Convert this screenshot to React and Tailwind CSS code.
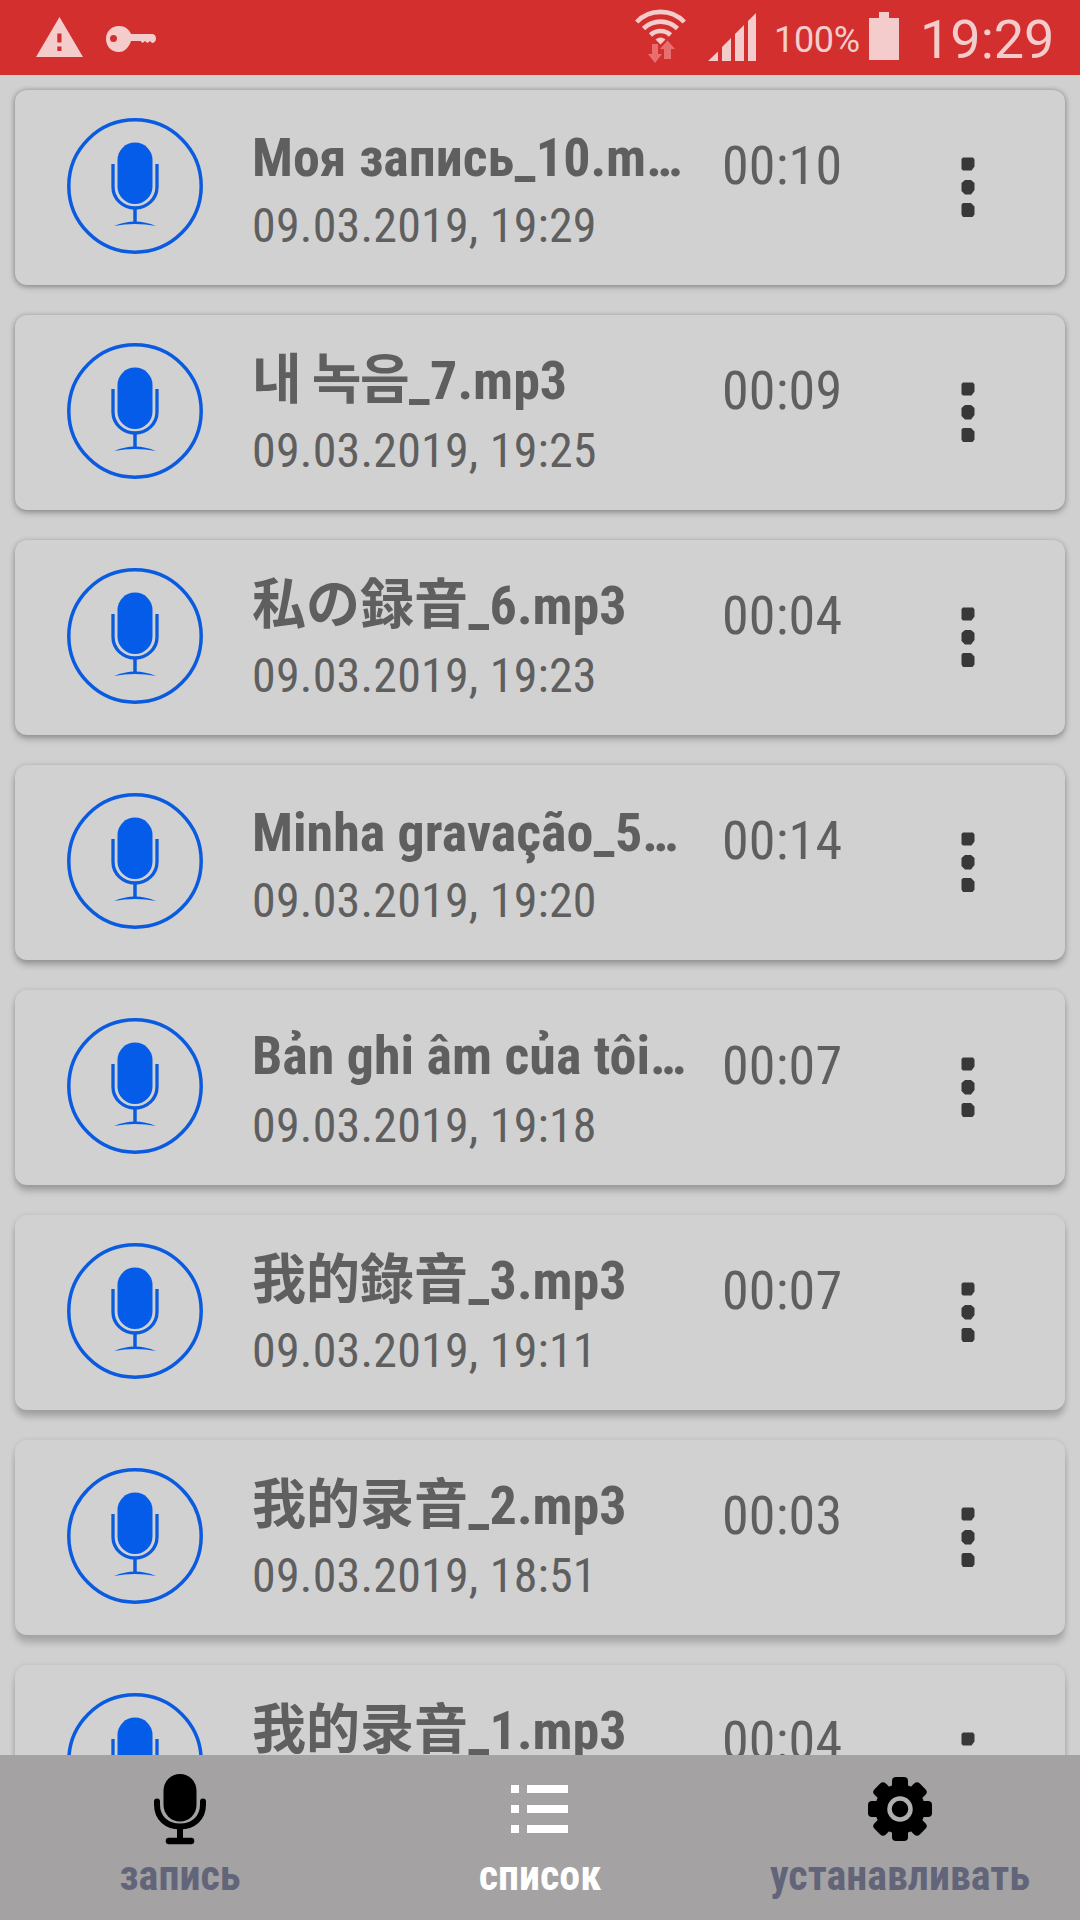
const LATIN = "font-['Roboto_Condensed','Roboto',sans-serif]";
const KR = "font-['Roboto_Condensed','Roboto','Noto_Sans_CJK_KR',sans-serif]";
const JP = "font-['Roboto_Condensed','Roboto','Noto_Sans_CJK_JP',sans-serif]";
const TC = "font-['Roboto_Condensed','Roboto','Noto_Sans_CJK_TC',sans-serif]";
const SC = "font-['Roboto_Condensed','Roboto','Noto_Sans_CJK_SC',sans-serif]";

const LOW = "pt-[25px]";
const HIGH = "pt-[23px]";

const recordings = [
  { title: "Моя запись_10.m…", date: "09.03.2019, 19:29", length: "00:10", font: LATIN, shift: LOW, shadow: "shadow-[0_2px_6px_rgba(0,0,0,0.26),0_0_5px_rgba(0,0,0,0.22)]" },
  { title: <><span className="tracking-[-1.25px]">내 녹음</span>_7.mp3</>, date: "09.03.2019, 19:25", length: "00:09", font: KR, shift: HIGH, shadow: "shadow-[0_3px_6px_rgba(0,0,0,0.26),0_0_5px_rgba(0,0,0,0.18)]" },
  { title: "私の録音_6.mp3", date: "09.03.2019, 19:23", length: "00:04", font: JP, shift: HIGH, shadow: "shadow-[0_4px_6px_rgba(0,0,0,0.25),0_0_5px_rgba(0,0,0,0.16)]" },
  { title: "Minha gravação_5…", date: "09.03.2019, 19:20", length: "00:14", font: LATIN, shift: LOW, shadow: "shadow-[0_5px_6px_rgba(0,0,0,0.24),0_0_5px_rgba(0,0,0,0.14)]" },
  { title: "Bản ghi âm của tôi…", date: "09.03.2019, 19:18", length: "00:07", font: LATIN, shift: HIGH, shadow: "shadow-[0_6px_6px_rgba(0,0,0,0.22),0_0_5px_rgba(0,0,0,0.12)]" },
  { title: "我的錄音_3.mp3", date: "09.03.2019, 19:11", length: "00:07", font: TC, shift: HIGH, shadow: "shadow-[0_7px_6px_rgba(0,0,0,0.2),0_0_5px_rgba(0,0,0,0.1)]" },
  { title: "我的录音_2.mp3", date: "09.03.2019, 18:51", length: "00:03", font: SC, shift: HIGH, shadow: "shadow-[0_8px_6px_rgba(0,0,0,0.18),0_0_5px_rgba(0,0,0,0.1)]" },
  { title: "我的录音_1.mp3", date: "09.03.2019, 18:50", length: "00:04", font: SC, shift: HIGH, shadow: "shadow-[0_8px_6px_rgba(0,0,0,0.18),0_0_5px_rgba(0,0,0,0.1)]" },
];

function StatusBar() {
  return (
    <header className="flex h-[75px] shrink-0 items-start bg-[#d32f2f] pl-9 text-[#f4cccc] font-['Roboto',sans-serif] font-stretch-normal">
      <svg className="mt-[17px] h-10 w-[47px] shrink-0" viewBox="0 0 47 40" fill="currentColor">
        <path fillRule="evenodd" d="M23.500 0 47 40H0zM21.300 16.500v9h4.200v-9zM21.300 29.500v4.500h4.200v-4.500z" />
      </svg>
      <svg className="mt-[25px] ml-[23px] h-7 w-[51px] shrink-0" viewBox="0 0 51 28" fill="currentColor">
        <path fillRule="evenodd" d="M13 1c6 0 10 3.500 12 8h21c2.500 0 4 2 4 4.500 0 2.800-2 4.500-4 4.500l-2-2-2.500 2-2.500-2-2.500 2-2-2H25c-2 6-6 11-12 11C5 27 0 21 0 14S5 1 13 1zM7.500 10a3.500 3.500 0 1 0 0 7 3.500 3.500 0 0 0 0-7z" />
      </svg>
      <svg className="mt-[9px] ml-[478px] h-[55px] w-[51px] shrink-0" viewBox="0 0 51 55" fill="none">
        <g stroke="currentColor" strokeWidth="4.600">
          <path d="M1.700 13A33 33 0 0 1 49.300 13" />
          <path d="M8.500 19.500A24.500 24.500 0 0 1 42.500 19.500" />
          <path d="M15.500 26A14.500 14.500 0 0 1 35.500 26" />
        </g>
        <path d="M20.500 30.500Q25.500 26.500 30.500 30.500L25.500 35.500z" fill="currentColor" />
        <path d="M17 35v10h-4l7 9 7-9h-4V35zM29 50V40h-4l7.500-8.500L40 40h-4v10z" fill="#e96f6f" />
      </svg>
      <svg className="mt-[12px] ml-[22px] h-[49px] w-[48px] shrink-0" viewBox="0 0 48 49" fill="currentColor">
        <path d="M0 49 10 39.500V49zM14 49V35l9-9v23zM27 49V22l9-9v36zM40 49V9l8-8v48z" />
      </svg>
      <span className="mt-[19px] ml-[18px] w-[87px] shrink-0 text-[36px] leading-[42px] tracking-[-0.3px]">100%</span>
      <svg className="mt-[12px] ml-[8px] h-12 w-[30px] shrink-0" viewBox="0 0 30 48" fill="currentColor">
        <path d="M10 0h10v6h10v42H0V6h10z" />
      </svg>
      <span className="mt-[8px] ml-[21px] text-[54px] leading-[64px] font-[370] whitespace-nowrap">19:29</span>
    </header>
  );
}

function MicBadge() {
  return (
    <svg className="mt-[27px] ml-[51px] h-[138px] w-[138px] shrink-0" viewBox="0 0 138 138" fill="none" stroke="#0a5be0">
      <circle cx="69" cy="69" r="66.200" strokeWidth="3.500" />
      <rect x="51.500" y="25.500" width="35" height="61.500" rx="17.500" fill="#045ce8" stroke="none" />
      <path d="M47 47v23a22 21 0 0 0 44 0V47" strokeWidth="3.300" />
      <path d="M69 91v15" strokeWidth="3.500" />
      <path d="M48 109Q69 100 90 109Q69 105 48 109z" fill="#045ce8" stroke="none" />
    </svg>
  );
}

function RecordingCard({ item }) {
  return (
    <li className={`flex h-[195px] shrink-0 rounded-xl bg-[#d1d1d1] text-[#5f5f5f] ${item.shadow}`}>
      <MicBadge />
      <div className="ml-[48px] w-[470px] shrink-0 whitespace-nowrap">
        <p className={`h-[106px] text-[54px] font-bold leading-[86px] ${item.shift} ${item.font}`}>{item.title}</p>
        <p className="mt-px text-[48px] leading-[58px] tracking-[0.2px]">{item.date}</p>
      </div>
      <span className="mt-[44px] w-[239px] shrink-0 text-[54px] leading-[64px] tracking-[0.2px]">{item.length}</span>
      <svg className="mt-[67px] h-[61px] w-[14px] shrink-0" viewBox="0 0 14 61" fill="#383838">
        <path d="M2 .5h10l1.500 2v7L10.500 13.500H2L.5 12V2zM4 23h6l3.500 3v7L10 37.500H4L.5 34v-8zM2 46h8l3.500 3.500v8L11.500 60H2L.5 57.500v-10z" />
      </svg>
    </li>
  );
}

function TabBar() {
  return (
    <nav className="z-10 grid h-[165px] shrink-0 grid-cols-3 bg-[#a4a2a3] text-center text-[42px] font-bold leading-[50px] text-[#62647a]">
      <div className="flex flex-col items-center pt-[17px]">
        <svg className="h-[76px] w-[56px]" viewBox="0 0 56 76" fill="none" stroke="#000">
          <rect x="11.500" y="2" width="33" height="47.500" rx="16.500" fill="#000" stroke="none" />
          <path d="M5 29.500v3c0 14 10 22 23 22s23-8 23-22v-3" strokeWidth="6" strokeLinecap="round" />
          <path d="M28 55v12" strokeWidth="6" />
          <path d="M17 69h22" strokeWidth="6.500" strokeLinecap="round" />
        </svg>
        <span className="mt-[3px]">запись</span>
      </div>
      <div className="flex flex-col items-center pt-[17px] text-white">
        <svg className="h-[76px] w-[58px]" viewBox="0 0 58 76" fill="currentColor">
          <path d="M0 13h8v8H0zM16 13h41v8H16zM0 33h8v8H0zM16 33h41v8H16zM0 53h8v8H0zM16 53h41v8H16z" />
        </svg>
        <span className="mt-[3px]">список</span>
      </div>
      <div className="flex flex-col items-center pt-[17px]">
        <svg className="h-[76px] w-[66px]" viewBox="-33 -37 66 76" fill="#000">
          <circle r="25" />
          <rect x="-8" y="-32" width="16" height="64" rx="4" />
          <rect x="-8" y="-32" width="16" height="64" rx="4" transform="rotate(45)" />
          <rect x="-8" y="-32" width="16" height="64" rx="4" transform="rotate(90)" />
          <rect x="-8" y="-32" width="16" height="64" rx="4" transform="rotate(135)" />
          <circle r="10.500" fill="none" stroke="#b0afb0" strokeWidth="4.500" />
        </svg>
        <span className="mt-[3px]">устанавливать</span>
      </div>
    </nav>
  );
}

export default function App() {
  return (
    <div className="flex h-[1920px] w-[1080px] flex-col overflow-hidden bg-[#d0d0d0] font-['Roboto_Condensed','Roboto',sans-serif] font-stretch-condensed">
      <StatusBar />
      <ul className="flex min-h-0 flex-1 flex-col gap-[30px] overflow-hidden px-[15px] pt-[15px]">
        {recordings.map((item) => (
          <RecordingCard key={item.date} item={item} />
        ))}
      </ul>
      <TabBar />
    </div>
  );
}
